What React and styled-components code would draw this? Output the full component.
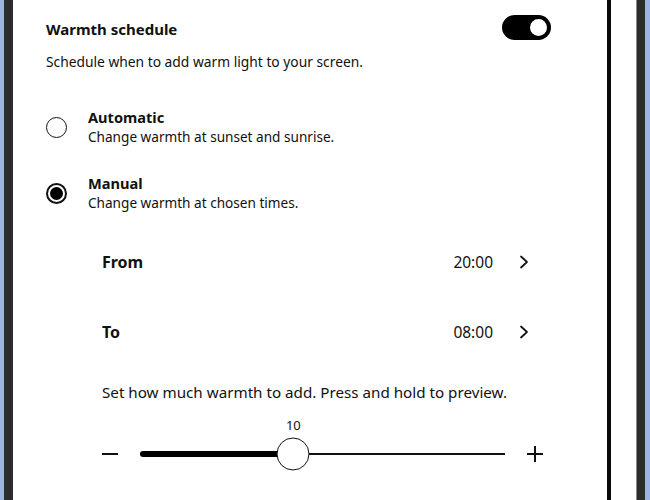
import styled, { createGlobalStyle } from "styled-components";

const GlobalStyle = createGlobalStyle`
	html, body {
		margin: 0;
		padding: 0;
		background: #ffffff;
	}
	body {
		font-family: "Noto Sans", "Open Sans", sans-serif;
		color: #111111;
		-webkit-font-smoothing: antialiased;
	}
`;

const warmth = { value: 10, max: 23.8 };

const Chevron = () => (
	<svg width="10" height="14" viewBox="0 0 10 14" fill="none">
		<polyline
			points="2,1.5 8,7 2,12.5"
			stroke="#111"
			strokeWidth="1.7"
			strokeLinecap="round"
			strokeLinejoin="round"
		/>
	</svg>
);

const App = () => {
	const percent = (warmth.value / warmth.max) * 100;

	return (
		<>
			<GlobalStyle />
			<Frame>
				<Edge $color="#9cb5e2" $width={4} />
				<Edge $color="#2b2c2e" $width={9} />
				<Panel>
					<Header>
						<Title>Warmth schedule</Title>
						<Toggle aria-label="Warmth schedule" />
					</Header>
					<Intro>Schedule when to add warm light to your screen.</Intro>

					<Options>
						<Option>
							<Radio />
							<OptionText>
								<OptionLabel>Automatic</OptionLabel>
								<OptionHint>Change warmth at sunset and sunrise.</OptionHint>
							</OptionText>
						</Option>
						<Option>
							<Radio $checked />
							<OptionText>
								<OptionLabel>Manual</OptionLabel>
								<OptionHint>Change warmth at chosen times.</OptionHint>
							</OptionText>
						</Option>
					</Options>

					<Times>
						<TimeRow>
							<TimeLabel>From</TimeLabel>
							<TimeValue>20:00</TimeValue>
							<Chevron />
						</TimeRow>
						<TimeRow>
							<TimeLabel>To</TimeLabel>
							<TimeValue>08:00</TimeValue>
							<Chevron />
						</TimeRow>
					</Times>

					<Amount>
						<AmountText>
							Set how much warmth to add. Press and hold to preview.
						</AmountText>
						<SliderRow>
							<Minus />
							<Track>
								<Fill style={{ width: `${percent}%` }} />
								<ValueLabel style={{ left: `${percent}%` }}>
									{warmth.value}
								</ValueLabel>
								<Knob style={{ left: `${percent}%` }} />
							</Track>
							<Plus />
						</SliderRow>
					</Amount>
				</Panel>
				<Gutter />
				<Edge $color="#2b2c2e" $width={8} $line />
				<Edge $color="#9cb5e2" $width={5} />
			</Frame>
		</>
	);
};

const Frame = styled.div`
	display: flex;
	width: 650px;
	height: 500px;
	overflow: hidden;
`;

const Edge = styled.div`
	flex: 0 0 ${({ $width }) => $width}px;
	background: ${({ $color }) => $color};
	border-left: ${({ $line }) => ($line ? "1px solid #8a8a8a" : "none")};
`;

const Gutter = styled.div`
	flex: 0 0 25px;
	background: #ffffff;
`;

const Panel = styled.div`
	flex: 1;
	background: #ffffff;
	border-right: 4px solid #0a0a0a;
	padding: 15px 56px 0 33px;
	display: flex;
	flex-direction: column;
`;

const Header = styled.div`
	display: flex;
	align-items: center;
	justify-content: space-between;
	height: 25px;
`;

const Title = styled.h2`
	margin: 2px 0 0;
	font-size: 15px;
	font-weight: 700;
	line-height: 20px;
`;

const Toggle = styled.div`
	position: relative;
	width: 49px;
	height: 25px;
	border-radius: 13px;
	background: #000000;

	&::after {
		content: "";
		position: absolute;
		right: 2px;
		top: 2px;
		width: 17px;
		height: 17px;
		border-radius: 50%;
		background: #ffffff;
		border: 2px solid #000000;
	}
`;

const Intro = styled.p`
	margin: 12px 0 0;
	font-size: 13.8px;
	line-height: 20px;
`;

const Options = styled.div`
	display: flex;
	flex-direction: column;
	gap: 26px;
	margin-top: 35px;
`;

const Option = styled.div`
	display: flex;
	align-items: center;
	gap: 21px;
`;

const Radio = styled.span`
	flex: 0 0 21px;
	width: 21px;
	height: 21px;
	box-sizing: border-box;
	border-radius: 50%;
	border: ${({ $checked }) => ($checked ? "2px" : "1.5px")} solid #111;
	display: flex;
	align-items: center;
	justify-content: center;

	&::after {
		content: "";
		display: ${({ $checked }) => ($checked ? "block" : "none")};
		width: 13px;
		height: 13px;
		border-radius: 50%;
		background: #000;
	}
`;

const OptionText = styled.div`
	display: flex;
	flex-direction: column;
`;

const OptionLabel = styled.span`
	font-size: 14.6px;
	font-weight: 700;
	line-height: 20px;
`;

const OptionHint = styled.span`
	font-size: 13.6px;
	line-height: 20px;
`;

const Times = styled.div`
	display: flex;
	flex-direction: column;
	margin: 14px 22px 0 56px;
`;

const TimeRow = styled.div`
	display: flex;
	align-items: center;
	gap: 26px;
	height: 70px;
`;

const TimeLabel = styled.span`
	flex: 1;
	font-size: 16px;
	font-weight: 700;
`;

const TimeValue = styled.span`
	font-size: 15.5px;
`;

const Amount = styled.div`
	margin: 15px 8px 0 56px;
	display: flex;
	flex-direction: column;
`;

const AmountText = styled.p`
	margin: 0;
	font-size: 15.2px;
	line-height: 20px;
`;

const SliderRow = styled.div`
	display: flex;
	align-items: center;
	gap: 22px;
	height: 34px;
	margin-top: 35px;
`;

const Minus = styled.span`
	flex: 0 0 16px;
	height: 2px;
	background: #111;
`;

const Plus = styled.span`
	position: relative;
	flex: 0 0 16px;
	height: 16px;

	&::before,
	&::after {
		content: "";
		position: absolute;
		background: #111;
	}
	&::before {
		left: 0;
		right: 0;
		top: 7px;
		height: 2px;
	}
	&::after {
		top: 0;
		bottom: 0;
		left: 7px;
		width: 2px;
	}
`;

const Track = styled.div`
	position: relative;
	flex: 1;
	height: 2px;
	background: #111;
`;

const Fill = styled.div`
	position: absolute;
	left: 0;
	top: -2px;
	height: 6px;
	border-radius: 3px;
	background: #000;
`;

const Knob = styled.div`
	position: absolute;
	top: 1px;
	width: 33px;
	height: 33px;
	box-sizing: border-box;
	border-radius: 50%;
	border: 1.5px solid #111;
	background: #fff;
	transform: translate(-50%, -50%);
`;

const ValueLabel = styled.span`
	position: absolute;
	top: -38px;
	font-size: 13px;
	line-height: 20px;
	transform: translateX(-50%);
`;

export default App;
